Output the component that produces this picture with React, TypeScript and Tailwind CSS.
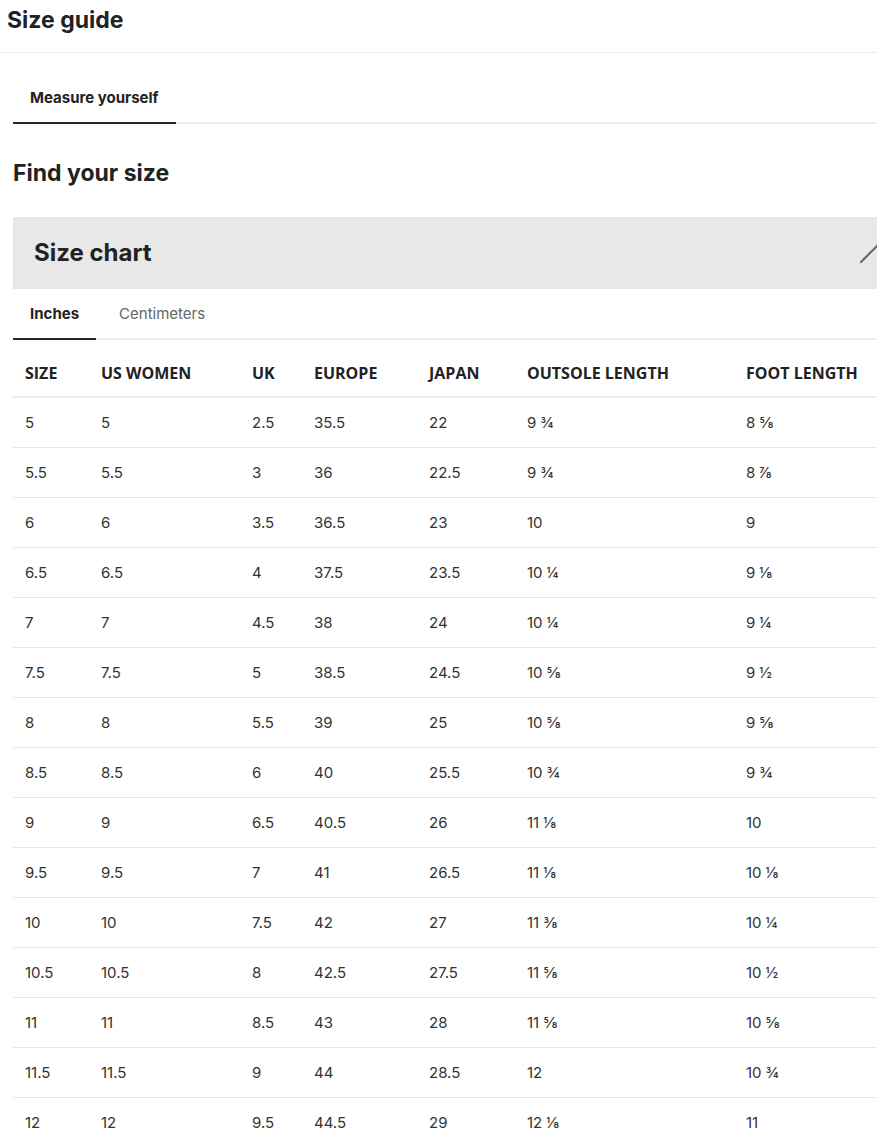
const headers = ["SIZE", "US WOMEN", "UK", "EUROPE", "JAPAN", "OUTSOLE LENGTH", "FOOT LENGTH"];
const widths = ["w-[76px]", "w-[151px]", "w-[62px]", "w-[115px]", "w-[98px]", "w-[219px]", "w-[144px]"];

const rows: string[][] = [
  ["5", "5", "2.5", "35.5", "22", "9 ¾", "8 ⅝"],
  ["5.5", "5.5", "3", "36", "22.5", "9 ¾", "8 ⅞"],
  ["6", "6", "3.5", "36.5", "23", "10", "9"],
  ["6.5", "6.5", "4", "37.5", "23.5", "10 ¼", "9 ⅛"],
  ["7", "7", "4.5", "38", "24", "10 ¼", "9 ¼"],
  ["7.5", "7.5", "5", "38.5", "24.5", "10 ⅝", "9 ½"],
  ["8", "8", "5.5", "39", "25", "10 ⅝", "9 ⅝"],
  ["8.5", "8.5", "6", "40", "25.5", "10 ¾", "9 ¾"],
  ["9", "9", "6.5", "40.5", "26", "11 ⅛", "10"],
  ["9.5", "9.5", "7", "41", "26.5", "11 ⅛", "10 ⅛"],
  ["10", "10", "7.5", "42", "27", "11 ⅜", "10 ¼"],
  ["10.5", "10.5", "8", "42.5", "27.5", "11 ⅝", "10 ½"],
  ["11", "11", "8.5", "43", "28", "11 ⅝", "10 ⅝"],
  ["11.5", "11.5", "9", "44", "28.5", "12", "10 ¾"],
  ["12", "12", "9.5", "44.5", "29", "12 ⅛", "11"],
];

function Value({ v }: { v: string }) {
  const [whole, frac] = v.split(" ");
  return (
    <span>
      {whole}
      {frac && <span className="ml-[4px]">{frac}</span>}
    </span>
  );
}

export default function App() {
  return (
    <div className="w-[877px] overflow-hidden bg-white text-[#222] font-['Inter','Lato',sans-serif]">
      <div className="border-b border-[#ececec] pl-[7px] pt-[6px] h-[53px]">
        <h1 className="text-[23px] font-bold leading-[28px]">Size guide</h1>
      </div>

      <div className="pl-[13px]">
        <div className="mt-[35px] flex border-b-2 border-[#ececec]">
          <div className="-mb-[2px] border-b-2 border-[#262626] px-[17px] pb-[14px] text-[15px] font-bold leading-[20px]">
            Measure yourself
          </div>
        </div>

        <h2 className="mt-[35px] text-[23px] font-bold leading-[28px]">Find your size</h2>

        <div className="mt-[30px] flex h-[72px] items-center justify-between overflow-hidden bg-[#e8e8e8] pl-[21px]">
          <span className="text-[24px] font-bold leading-[30px]">Size chart</span>
          <svg width="36" height="22" viewBox="0 0 36 22" className="mr-[-18px] mt-[1px]">
            <path d="M2 19 L18 3 L34 19" fill="none" stroke="#6b6b6b" strokeWidth="2.2" strokeLinecap="round" />
          </svg>
        </div>

        <div className="flex border-b-2 border-[#ececec]">
          <div className="-mb-[2px] border-b-2 border-[#262626] px-[17px] pb-[14px] pt-[15px] text-[15px] font-bold leading-[20px]">
            Inches
          </div>
          <div className="pl-[23px] pb-[14px] pt-[15px] text-[15px] leading-[20px] text-[#666]">Centimeters</div>
        </div>

        <table className="w-[865px] table-fixed border-collapse">
          <thead>
            <tr className="border-b-2 border-[#ececec]">
              {headers.map((h, i) => (
                <th
                  key={h}
                  className={`${widths[i]} h-[57px] pl-[12px] pt-[10px] text-left text-[16px] font-bold font-['Open_Sans',sans-serif] text-[#222]`}
                >
                  {h}
                </th>
              ))}
            </tr>
          </thead>
          <tbody>
            {rows.map((r) => (
              <tr key={r[0]} className="border-b border-[#e6e6e6]">
                {r.map((c, i) => (
                  <td key={i} className="h-[50px] pl-[12px] pt-[2px] text-[15px] text-[#333]">
                    <Value v={c} />
                  </td>
                ))}
              </tr>
            ))}
          </tbody>
        </table>
      </div>
    </div>
  );
}
